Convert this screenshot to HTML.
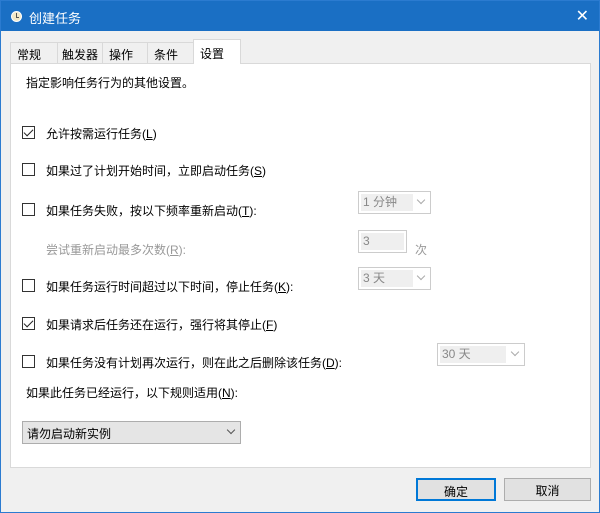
<!DOCTYPE html>
<html><head><meta charset="utf-8"><style>
*{margin:0;padding:0;box-sizing:border-box}
body{width:600px;height:513px;overflow:hidden;font-family:"Liberation Sans","Microsoft YaHei","Noto Sans CJK SC",sans-serif;font-size:12px;color:#000;background:#fff}
.win{position:absolute;left:0;top:0;width:600px;height:513px;background:#f0f0f0;border:1px solid #2b7bd0}
.title{position:absolute;left:0;top:0;width:598px;height:30px;background:#1a6fc4;color:#fff;font-size:13px}
.title .t{position:absolute;left:28px;top:7px}
.title .x{position:absolute;right:10px;top:5px;font-size:16px}
.clock{position:absolute;left:10px;top:10px;width:11px;height:11px;border-radius:50%;background:#f3e9c8;border:1px solid #fff}
.clock::after{content:"";position:absolute;left:4px;top:1px;width:2px;height:4px;border-left:1px solid #555;border-bottom:1px solid #555}
.tab{position:absolute;top:41px;height:21px;border:1px solid #d9d9d9;border-bottom:none;background:#f0f0f0;padding:3px 0 0 6px;white-space:nowrap;overflow:hidden}
.tab.a{top:38px;height:25px;background:#fff;z-index:2}
.panel{position:absolute;left:9px;top:62px;width:581px;height:405px;background:#fff;border:1px solid #d9d9d9}
.a1{position:absolute;white-space:nowrap}
.cb{position:absolute;width:13px;height:13px;border:1px solid #333;background:#fff}
.cb.c::after{content:"";position:absolute;left:3px;top:0px;width:4px;height:8px;border:solid #222;border-width:0 1.5px 1.5px 0;transform:rotate(45deg)}
.dd{position:absolute;height:23px;border:1px solid #ccc;background:#fff;color:#888}
.dd .in{position:absolute;left:2px;top:2px;bottom:2px;background:#efefef;padding:0 2px;line-height:17px}
.dd .ar{position:absolute;right:6px;top:5px;width:6px;height:6px;border:solid #aaa;border-width:0 1px 1px 0;transform:rotate(45deg)}
.g{color:#999}
u{text-decoration:underline}
.btn{position:absolute;top:477px;height:23px;border:1px solid #adadad;background:#e1e1e1;text-align:center;padding-top:3px}
</style></head><body>
<div class="win">
<div class="title"><div class="clock"></div><span class="t">创建任务</span><span class="x">✕</span></div>
<div class="tab" style="left:9px;width:48px">常规</div>
<div class="tab" style="left:56px;width:46px;padding-left:4px">触发器</div>
<div class="tab" style="left:101px;width:46px">操作</div>
<div class="tab" style="left:146px;width:47px">条件</div>
<div class="tab a" style="left:192px;width:48px;padding-top:5px">设置</div>
<div class="panel"></div>
<div class="a1" style="left:25px;top:73px">指定影响任务行为的其他设置。</div>
<div class="cb c" style="left:21px;top:125px"></div><div class="a1" style="left:45px;top:124px">允许按需运行任务(<u>L</u>)</div>
<div class="cb" style="left:21px;top:162px"></div><div class="a1" style="left:45px;top:161px">如果过了计划开始时间，立即启动任务(<u>S</u>)</div>
<div class="cb" style="left:21px;top:202px"></div><div class="a1" style="left:45px;top:201px">如果任务失败，按以下频率重新启动(<u>T</u>):</div>
<div class="dd" style="left:357px;top:190px;width:73px"><div class="in" style="width:52px">1 分钟</div><div class="ar"></div></div>
<div class="a1 g" style="left:45px;top:240px">尝试重新启动最多次数(<u>R</u>):</div>
<div class="dd" style="left:357px;top:229px;width:49px"><div class="in" style="right:2px">3</div></div>
<div class="a1 g" style="left:414px;top:240px">次</div>
<div class="cb" style="left:21px;top:278px"></div><div class="a1" style="left:45px;top:277px">如果任务运行时间超过以下时间，停止任务(<u>K</u>):</div>
<div class="dd" style="left:357px;top:266px;width:73px"><div class="in" style="width:52px">3 天</div><div class="ar"></div></div>
<div class="cb c" style="left:21px;top:316px"></div><div class="a1" style="left:45px;top:315px">如果请求后任务还在运行，强行将其停止(<u>F</u>)</div>
<div class="cb" style="left:21px;top:354px"></div><div class="a1" style="left:45px;top:353px">如果任务没有计划再次运行，则在此之后删除该任务(<u>D</u>):</div>
<div class="dd" style="left:436px;top:342px;width:88px"><div class="in" style="width:66px">30 天</div><div class="ar"></div></div>
<div class="a1" style="left:25px;top:383px">如果此任务已经运行，以下规则适用(<u>N</u>):</div>
<div class="dd" style="left:21px;top:420px;width:219px;background:#e5e5e5;border-color:#adadad;color:#000"><div class="a1" style="left:4px;top:3px">请勿启动新实例</div><div class="ar" style="border-color:#555"></div></div>
<div class="btn" style="left:415px;width:80px;border:2px solid #0078d7">确定</div>
<div class="btn" style="left:503px;width:87px">取消</div>
</div>
</body></html>
